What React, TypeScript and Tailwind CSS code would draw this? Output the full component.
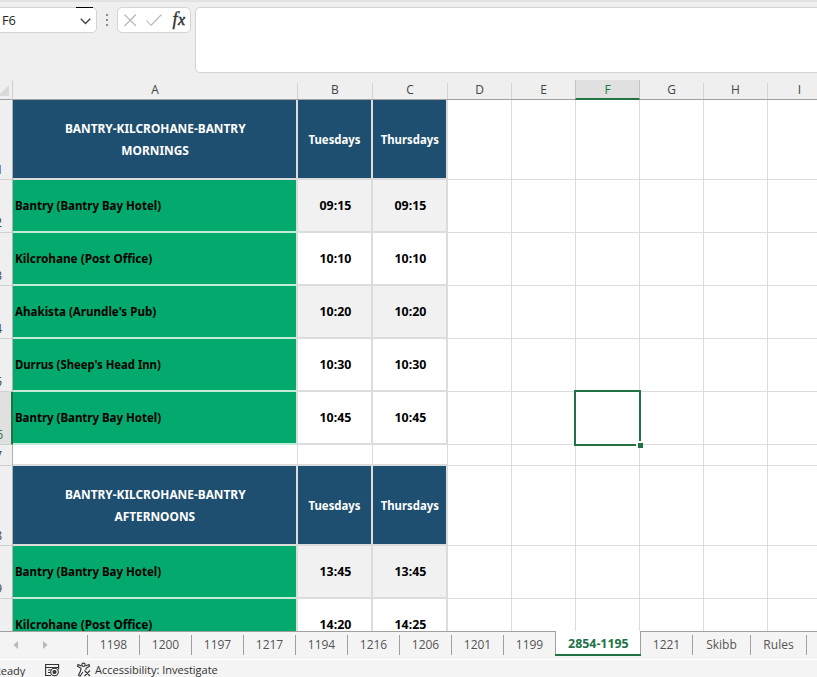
import type { ReactNode } from "react";

const sans = "font-['Open_Sans','Noto_Sans',sans-serif]";
const bold = "font-['Noto_Sans','Open_Sans',sans-serif] font-bold text-[12px]";

type Row = { n: string; kind: "head" | "body" | "blank"; a?: string[]; b?: string; c?: string; grey?: boolean; active?: boolean; fit?: string };

const rows: Row[] = [
  { n: "1", kind: "head", a: ["BANTRY-KILCROHANE-BANTRY", "MORNINGS"], b: "Tuesdays", c: "Thursdays" },
  { n: "2", kind: "body", a: ["Bantry (Bantry Bay Hotel)"], b: "09:15", c: "09:15", grey: true, fit: "scale-x-[.955]" },
  { n: "3", kind: "body", a: ["Kilcrohane (Post Office)"], b: "10:10", c: "10:10", fit: "scale-x-[.98]" },
  { n: "4", kind: "body", a: ["Ahakista (Arundle's Pub)"], b: "10:20", c: "10:20", grey: true, fit: "scale-x-[.965]" },
  { n: "5", kind: "body", a: ["Durrus (Sheep's Head Inn)"], b: "10:30", c: "10:30", fit: "scale-x-[.94]" },
  { n: "6", kind: "body", a: ["Bantry (Bantry Bay Hotel)"], b: "10:45", c: "10:45", active: true, fit: "scale-x-[.955]" },
  { n: "7", kind: "blank" },
  { n: "8", kind: "head", a: ["BANTRY-KILCROHANE-BANTRY", "AFTERNOONS"], b: "Tuesdays", c: "Thursdays" },
  { n: "9", kind: "body", a: ["Bantry (Bantry Bay Hotel)"], b: "13:45", c: "13:45", grey: true, fit: "scale-x-[.955]" },
  { n: "10", kind: "body", a: ["Kilcrohane (Post Office)"], b: "14:20", c: "14:25", fit: "scale-x-[.98]" },
];

const columns = [
  ["A", "w-[285px]"], ["B", "w-[75px]"], ["C", "w-[75px]"], ["D", "w-16"], ["E", "w-16"],
  ["F", "w-16"], ["G", "w-16"], ["H", "w-16"], ["I", "w-16"],
];

const tabs = [
  ["1198", "w-[52px]"], ["1200", "w-[52px]"], ["1197", "w-[52px]"], ["1217", "w-[52px]"], ["1194", "w-[52px]"],
  ["1216", "w-[52px]"], ["1206", "w-[52px]"], ["1201", "w-[52px]"], ["1199", "w-[52px]"], ["2854-1195", "w-[86px]"],
  ["1221", "w-[51px]"], ["Skibb", "w-[58px]"], ["Rules", "w-[56px]"],
];

function Narrow({ children, scale, left }: { children: ReactNode; scale: string; left?: boolean }) {
  return <span className={`inline-block whitespace-nowrap ${scale} ${left ? "origin-left" : "origin-center"}`}>{children}</span>;
}

function FormulaBar() {
  return (
    <div className="flex h-[80px] shrink-0 items-start border-t-2 border-[#e2e2e2] pt-[5px]">
      <div className="relative flex h-[26px] w-[97px] items-center justify-between rounded-r-[5px] border border-l-0 border-[#d4d4d4] bg-white pl-[2px] pr-[5px] pt-px text-[12px] text-[#222]">
        <span><Narrow scale="scale-x-[1.06]" left>F6</Narrow></span>
        <svg width="11" height="7" viewBox="0 0 11 7" className="mt-px" fill="none" stroke="#444" strokeWidth="1.4"><path d="M.8 .8 5.5 5.5 10.2 .8" /></svg>
        <div className="absolute -top-px right-[3px] h-px w-[17px] bg-black" />
      </div>
      <svg width="20" height="26" fill="#8a8a8a"><path d="M9 7h2v2H9zM9 12h2v2H9zM9 17h2v2H9z" /></svg>
      <div className="flex h-[26px] w-[74px] items-center rounded-[5px] border border-[#d4d4d4] bg-white">
        <svg width="72" height="24" fill="none" stroke="#b5b5b5" strokeWidth="1.1">
          <path d="M6.500 6.500 18 18M18 6.500 6.500 18M28.500 12.500 33 17.500 43.500 6.500" />
          <text x="54.500" y="17" fill="#333" stroke="#333" strokeWidth=".4" className="font-['Liberation_Serif',serif] text-[18px] italic">f</text>
          <text x="60" y="17" fill="#333" stroke="#333" strokeWidth=".5" className="font-['Liberation_Serif',serif] text-[16px] italic">x</text>
        </svg>
      </div>
      <div className="ml-1 h-[66px] flex-1 rounded-l-[5px] border border-r-0 border-[#d4d4d4] bg-white" />
    </div>
  );
}

function ColumnHeads() {
  return (
    <div className="flex h-5 shrink-0 text-[12px] text-[#444]">
      <div className="flex w-[13px] shrink-0 flex-col border-b border-r border-b-[#a0a0a0] border-r-[#cfcfcf]">
        <svg width="9" height="12" className="mt-[4px]" fill="#d9d9d9"><path d="M9 1v11H-2z" /></svg>
      </div>
      {columns.map(([name, width]) => name === "F" ? (
        <div key={name} className="-ml-px flex h-5 w-[65px] shrink-0 items-center justify-center border-x border-b-2 border-x-[#c4c4c4] border-b-[#217346] bg-[#e0e0e0] pt-px text-[#217346]">{name}</div>
      ) : (
        <div key={name} className={`flex h-5 shrink-0 flex-col border-b border-[#a0a0a0] ${width}`}>
          <div className="mt-[3px] flex h-4 items-center justify-center border-r border-[#d4d4d4] pb-[2px]">{name}</div>
        </div>
      ))}
    </div>
  );
}

function SheetRow({ row }: { row: Row }) {
  const head = row.kind === "head";
  const blank = row.kind === "blank";
  const height = head ? "h-20" : blank ? "h-[21px]" : "h-[53px]";
  const edge = blank ? "border-r border-b-2 border-[#dcdcdc]" : "border-r-2 border-b-2 border-[#dcdcdc]";
  const fillA = head ? "bg-[#1e4e70] text-white" : blank ? "bg-white" : "bg-[#04aa6d] text-black border-b-[#c3ecd8]";
  const fillB = head ? "bg-[#1e4e70] text-white" : row.grey ? "bg-[#f1f1f1]" : "bg-white";
  const centre = "flex shrink-0 items-center justify-center";
  const pad = row.n === "1" ? "pr-[9px]" : row.active ? "pr-[8px]" : "pr-[10px]";
  return (
    <div className={`flex shrink-0 ${height}`}>
      <div className={`flex w-[13px] shrink-0 items-end justify-end overflow-hidden border-b border-b-[#d0d0d0] text-[12px] leading-[19px] ${pad} ${row.active ? "border-r-2 border-r-[#217346] bg-[#e0e0e0] text-[#217346]" : "border-r border-r-[#a9b5b0] text-[#444]"}`}>
        <span>{row.n}</span>
      </div>
      <div className={`flex w-[285px] shrink-0 flex-col justify-center ${edge} ${fillA} ${bold} ${head ? "items-center pl-px pt-[2px] leading-[22px]" : "items-start pl-[2px]"}`}>
        {row.a?.map((line) => (
          <Narrow key={line} left={!head} scale={head ? "scale-x-[.99]" : row.fit ?? ""}>{line}</Narrow>
        ))}
      </div>
      {[row.b, row.c].map((v, i) => (
        <div key={i} className={`w-[75px] ${centre} ${edge} ${fillB} ${bold} ${head ? "pt-[2px]" : "pl-px"}`}>{v && <Narrow scale={head ? "scale-x-[.945]" : "scale-x-[1.03]"}>{v}</Narrow>}</div>
      ))}
      {["D", "E", "F", "G", "H", "I"].map((c) => (
        <div key={c} className="relative w-16 shrink-0 border-b border-r border-[#dcdcdc] bg-white">
          {c === "F" && row.active && (
            <>
              <div className="absolute -left-[2px] -top-[2px] z-10 h-[56px] w-[67px] border-2 border-[#217346] bg-white" />
              <div className="absolute left-[60px] top-[49px] z-10 size-[7px] border-l-2 border-t-2 border-white bg-[#217346]" />
            </>
          )}
        </div>
      ))}
    </div>
  );
}

function SheetTabs() {
  return (
    <div className="flex h-[29px] shrink-0 border-b border-white bg-[#f4f4f4] text-[12px] text-[#555]">
      <div className="w-[87px] shrink-0 border-t border-[#a0a0a0]">
        <svg width="60" height="26" fill="#b9b9b9"><path d="M18 9v8l-4.500-4zM43 9v8l4.500-4z" /></svg>
      </div>
      {tabs.map(([name, width]) => name === "2854-1195" ? (
        <div key={name} className={`flex h-[25px] shrink-0 items-center justify-center border-b-2 border-[#217346] bg-white font-bold text-[#217346] ${width}`}>
          <div className="flex h-full w-full items-center justify-center border-x border-[#a0a0a0] pt-[3px]"><Narrow scale="scale-x-[1.03]">{name}</Narrow></div>
        </div>
      ) : (
        <div key={name} className={`shrink-0 border-t border-[#a0a0a0] pt-[3px] ${width}`}>
          <div className={`flex h-5 items-center justify-center ${name === "1221" ? "" : "border-l border-[#a0a0a0]"}`}>{name}</div>
        </div>
      ))}
      <div className="flex-1 border-t border-[#a0a0a0] pt-[3px]"><div className="h-5 border-l border-[#a0a0a0]" /></div>
    </div>
  );
}

function StatusBar() {
  return (
    <div className="flex h-[17px] shrink-0 overflow-hidden bg-[#f4f4f4] text-[11px] leading-[20px] text-[#333]">
      <div className="flex w-[45px] shrink-0 justify-start pt-px"><span className="-ml-[6px]">Ready</span></div>
      <svg width="16" height="17" fill="none" stroke="#333" strokeWidth="1.100">
        <path d="M6 15.500H.600V4.500h13v5M.600 7.500h13M3 10h4M3 12.500h2.500" /><circle cx="9.500" cy="12" r="3.800" fill="#f4f4f4" /><circle cx="9.500" cy="12" r="1.500" fill="#333" />
      </svg>
      <svg width="18" height="17" className="ml-[15px]" fill="none" stroke="#333" strokeWidth="1.100">
        <circle cx="7.500" cy="4.800" r="1.700" /><path d="M5.500 6 2 4.500 1.500 6.300 5 8.300 4.500 11 2.500 15.200 4 16.300 7 12M9.500 6 13 4.500 13.500 6.300 10 8.300V10M8.500 10.500 14 16M14 10.500 8.500 16" />
      </svg>
      <span className="ml-px whitespace-nowrap">Accessibility: Investigate</span>
    </div>
  );
}

export default function App() {
  return (
    <div className={`flex h-[677px] w-[817px] flex-col overflow-hidden bg-[#efefef] ${sans}`}>
      <FormulaBar />
      <ColumnHeads />
      <div className="flex h-[531px] shrink-0 flex-col overflow-hidden">
        {rows.map((row) => <SheetRow key={row.n} row={row} />)}
      </div>
      <SheetTabs />
      <StatusBar />
    </div>
  );
}
